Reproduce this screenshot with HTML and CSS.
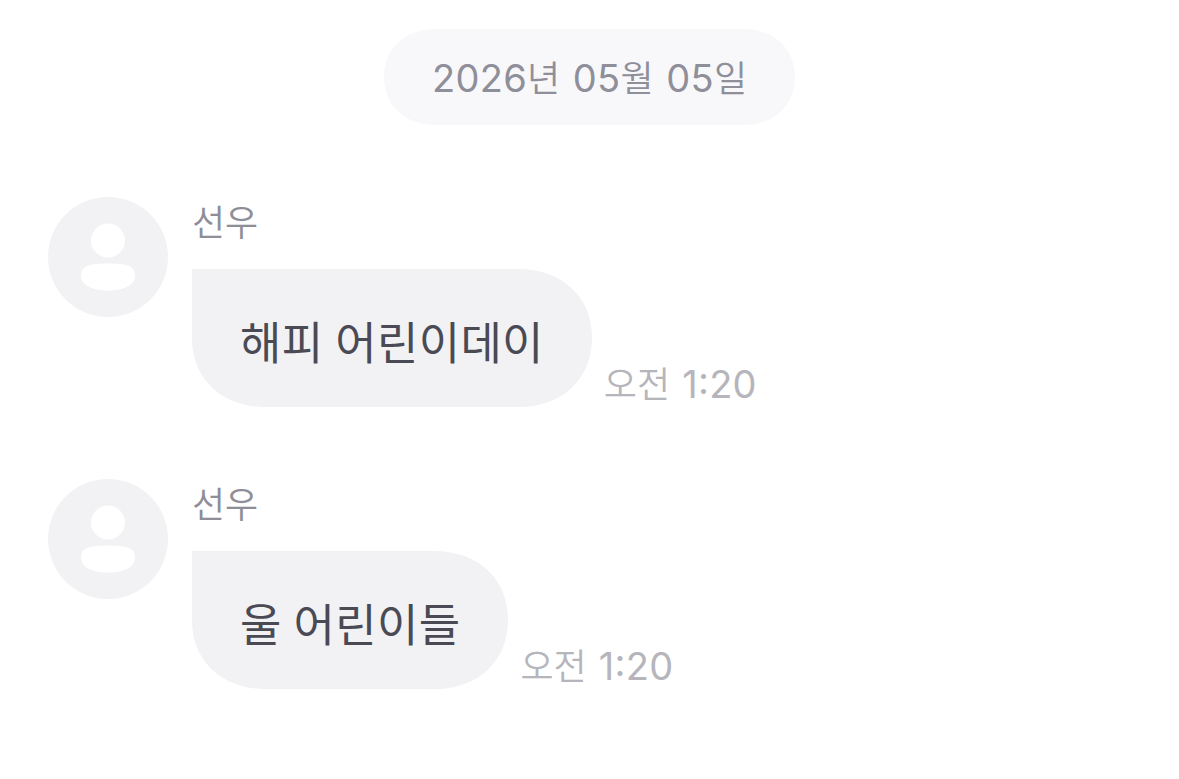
FILE: index.html
```html
<!DOCTYPE html>
<html lang="ko">
<head>
    <meta charset="UTF-8">
    <meta name="viewport" content="width=device-width, initial-scale=1.0">
    <title>채팅</title>
    <link rel="stylesheet" href="styles.css">
</head>
<body>

<main class="chat">
    <div class="date"><span class="num">2026</span>년 <span class="num">05</span>월 <span class="num">05</span>일</div>

    <div class="message">
        <svg class="avatar" viewBox="0 0 120 120" aria-hidden="true">
            <circle cx="60" cy="60" r="60" fill="#f2f2f5"/>
            <circle cx="60" cy="43.5" r="17" fill="#fff"/>
            <path d="M33 78.500C33 69 41 66.500 60 66.500S87 69 87 78.500C87 88 76 93.500 60 93.500S33 88 33 78.500Z" fill="#fff"/>
        </svg>
        <div class="content">
            <div class="name">선우</div>
            <div class="row">
                <div class="bubble">해피 어린이데이</div>
                <div class="time">오전 <span class="num">1:20</span></div>
            </div>
        </div>
    </div>

    <div class="message">
        <svg class="avatar" viewBox="0 0 120 120" aria-hidden="true">
            <circle cx="60" cy="60" r="60" fill="#f2f2f5"/>
            <circle cx="60" cy="43.5" r="17" fill="#fff"/>
            <path d="M33 78.500C33 69 41 66.500 60 66.500S87 69 87 78.500C87 88 76 93.500 60 93.500S33 88 33 78.500Z" fill="#fff"/>
        </svg>
        <div class="content">
            <div class="name">선우</div>
            <div class="row">
                <div class="bubble">울 어린이들</div>
                <div class="time">오전 <span class="num">1:20</span></div>
            </div>
        </div>
    </div>
</main>

</body>
</html>
```
FILE: styles.css
```css
* {
    box-sizing: border-box;
}

body {
    margin: 0;
    background-color: #fff;
    font-family: "Noto Sans CJK KR", sans-serif;
}

.chat {
    display: flex;
    flex-direction: column;
    height: 779px;
    padding: 29px 48px 0;
}

.num {
    font-family: Inter, sans-serif;
    font-size: 38px;
    font-weight: 400;
    letter-spacing: 0.3px;
    font-feature-settings: "case";
}

.date {
    align-self: center;
    width: 411px;
    height: 96px;
    margin-bottom: 72px;
    border-radius: 52px / 48px;
    corner-shape: superellipse(1.1);
    background-color: #f8f8fb;
    color: #8f8f9a;
    font-size: 36px;
    font-weight: 350;
    line-height: 94px;
    text-align: center;
    word-spacing: 2.5px;
    white-space: nowrap;
}

.message {
    display: flex;
    gap: 24px;
    height: 210px;
    margin-bottom: 72px;
}

.avatar {
    width: 120px;
    height: 120px;
}

.name {
    height: 72px;
    color: #8e8e98;
    font-size: 36px;
    font-weight: 350;
    line-height: 46px;
}

.row {
    display: flex;
    align-items: flex-end;
    gap: 12px;
}

.bubble {
    height: 138px;
    padding: 0 48px;
    border-radius: 0 74px 74px 74px / 0 69px 69px 69px;
    corner-shape: superellipse(1.1);
    background-color: #f2f2f5;
    color: #4a4a54;
    font-size: 45px;
    line-height: 144px;
    letter-spacing: 0.3px;
    word-spacing: -1px;
    white-space: nowrap;
}

.time {
    height: 48px;
    color: #b5b5bb;
    font-size: 36px;
    font-weight: 350;
    line-height: 46px;
    word-spacing: 2px;
    white-space: nowrap;
}
```
